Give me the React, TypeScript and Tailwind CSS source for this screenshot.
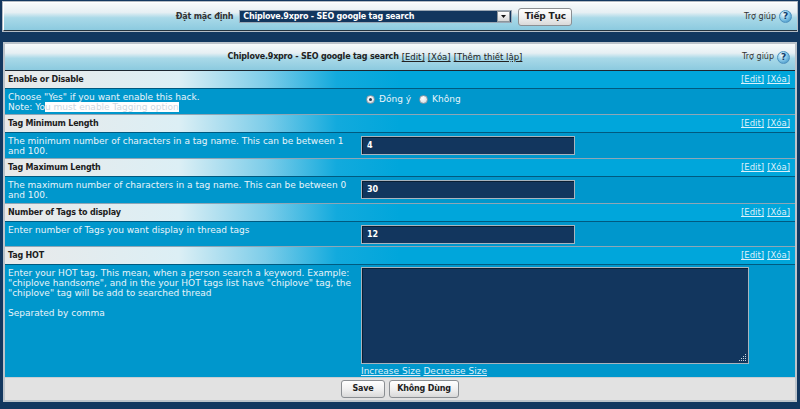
import type { ReactNode } from "react";

type Row = {
  title: string;
  height: string;
  description: ReactNode;
  control: ReactNode;
};

const HelpIcon = () => (
  <span className="inline-flex h-[13px] w-[13px] items-center justify-center rounded-full border border-[#4f93c0] bg-[radial-gradient(circle_at_35%_30%,#f2fafe_0%,#8ccbea_45%,#2f86bd_100%)] text-[9px] font-bold leading-none text-[#123e6a]">
    ?
  </span>
);

const Help = () => (
  <div className="flex w-[56px] items-center justify-end gap-[3px] whitespace-nowrap pr-[5px] text-[8px] text-[#333]">
    <span>Trợ giúp</span>
    <HelpIcon />
  </div>
);

const Radio = ({ checked }: { checked?: boolean }) => (
  <span className="inline-flex h-[9px] w-[9px] items-center justify-center rounded-full border border-[#8a98a4] bg-[radial-gradient(circle_at_40%_35%,#ffffff_0%,#dfe5ea_60%,#b3bec7_100%)]">
    {checked && <span className="h-[3px] w-[3px] rounded-full bg-[#1f3a52]" />}
  </span>
);

const TextInput = ({ value }: { value: string }) => (
  <div className="mt-[3px] flex h-[19px] w-[214px] items-center border border-[#a9b4be] bg-[#12365e] pl-[5px] text-[8px] font-bold text-white shadow-[inset_1px_1px_0_#0a1e33]">
    {value}
  </div>
);

const rows: Row[] = [
  {
    title: "Enable or Disable",
    height: "h-[26px]",
    description: (
      <>
        Choose "Yes" if you want enable this hack.
        <br />
        Note: Yo<span className="bg-white text-[#cdd8df]">u must enable Tagging option</span>
      </>
    ),
    control: (
      <div className="flex items-center gap-[4px] pl-[5px] pt-[5px]">
        <Radio checked />
        <span className="mr-[4px]">Đồng ý</span>
        <Radio />
        <span>Không</span>
      </div>
    ),
  },
  {
    title: "Tag Minimum Length",
    height: "h-[26px]",
    description: (
      <>
        The minimum number of characters in a tag name. This can be between 1
        <br />
        and 100.
      </>
    ),
    control: <TextInput value="4" />,
  },
  {
    title: "Tag Maximum Length",
    height: "h-[27px]",
    description: (
      <>
        The maximum number of characters in a tag name. This can be between 0
        <br />
        and 100.
      </>
    ),
    control: <TextInput value="30" />,
  },
  {
    title: "Number of Tags to display",
    height: "h-[25px]",
    description: <>Enter number of Tags you want display in thread tags</>,
    control: <TextInput value="12" />,
  },
  {
    title: "Tag HOT",
    height: "h-[112px]",
    description: (
      <>
        Enter your HOT tag. This mean, when a person search a keyword. Example:
        <br />
        "chiplove handsome", and in the your HOT tags list have "chiplove" tag, the
        <br />
        "chiplove" tag will be add to searched thread
        <br />
        <br />
        Separated by comma
      </>
    ),
    control: (
      <div className="pt-[2px]">
        <div className="relative h-[97px] w-[388px] border border-[#a9b4be] bg-[#12365e] shadow-[inset_1px_1px_0_#0a1e33]">
          <svg className="absolute bottom-[2px] right-[2px]" width="7" height="7" viewBox="0 0 7 7">
            <g fill="#c9d3dc">
              <rect x="6" y="0" width="1" height="1" />
              <rect x="4" y="2" width="1" height="1" />
              <rect x="6" y="2" width="1" height="1" />
              <rect x="2" y="4" width="1" height="1" />
              <rect x="4" y="4" width="1" height="1" />
              <rect x="6" y="4" width="1" height="1" />
              <rect x="0" y="6" width="1" height="1" />
              <rect x="2" y="6" width="1" height="1" />
              <rect x="4" y="6" width="1" height="1" />
              <rect x="6" y="6" width="1" height="1" />
            </g>
          </svg>
        </div>
        <div className="mt-[2px] flex gap-[3px] leading-[10px] text-[#dcf0fa] underline">
          <span>Increase Size</span>
          <span>Decrease Size</span>
        </div>
      </div>
    ),
  },
];

const Button = ({ children, width }: { children: ReactNode; width: string }) => (
  <button
    className={`flex h-[18px] ${width} items-center justify-center rounded-[3px] border border-[#8b8f93] bg-[linear-gradient(to_bottom,#ffffff_0%,#f1f1f1_50%,#d9d9d9_100%)] text-[8px] font-bold tracking-[-0.2px] text-[#222]`}
  >
    {children}
  </button>
);

const barGradient =
  "bg-[linear-gradient(to_bottom,#f7fafb_0%,#e6eff3_35%,#a9d9e8_55%,#8ccadf_100%)]";

export default function App() {
  return (
    <div className="h-[409px] w-[800px] overflow-hidden bg-[#12375f] pt-[1px] font-['DejaVu_Sans',Verdana,sans-serif] text-[9px] text-[#e8f4fa]">
      {/* top selector bar */}
      <div className="mx-[2px] border border-[#b4bcc4]">
        <div className={`flex h-[29px] items-center border-l border-t border-white border-b border-b-[#26323d] ${barGradient}`}>
          <div className="flex flex-1 items-center justify-center gap-[6px] pl-[3px]">
            <span className="text-[8px] font-bold tracking-[-0.2px] text-[#333]">Đặt mặc định</span>
            <div className="flex h-[13px] w-[273px] items-center border border-[#9aa7b4] bg-[#12365e]">
              <span className="flex-1 pl-[3px] text-[8px] font-bold tracking-[-0.2px] text-white">
                Chiplove.9xpro - SEO google tag search
              </span>
              <span className="mr-[1px] flex h-[11px] w-[13px] items-center justify-center border border-[#8c949b] bg-[linear-gradient(to_bottom,#ffffff,#d6d6d6)]">
                <svg width="5" height="3" viewBox="0 0 5 3">
                  <path d="M0 0h5L2.5 3z" fill="#111" />
                </svg>
              </span>
            </div>
            <Button width="w-[54px]">
              <span className="text-[9px]">Tiếp Tục</span>
            </Button>
          </div>
          <Help />
        </div>
      </div>

      {/* main settings panel */}
      <div className="mx-[3px] mt-[10px] border-2 border-[#bcc3ca]">
        <div className={`flex h-[27px] items-center border-b border-b-[#1c2630] ${barGradient}`}>
          <div className="flex flex-1 items-center justify-center gap-[3px] pl-[6px] text-[8.5px] text-[#222]">
            <span className="text-[8px] font-bold tracking-[-0.2px]">Chiplove.9xpro - SEO google tag search</span>
            <span className="underline">[Edit]</span>
            <span className="underline">[Xóa]</span>
            <span className="underline">[Thêm thiết lập]</span>
          </div>
          <Help />
        </div>

        {rows.map((row, i) => (
          <div key={row.title}>
            <div className="flex h-[18px] items-center justify-between border-b border-b-[#005a80] bg-[linear-gradient(to_right,#e9e9e9_0%,#dceff5_22%,#7dcde9_33%,#12aadd_42%,#00a6db_50%)] pl-[3px] pr-[5px]">
              <span className="text-[8px] font-bold tracking-[-0.2px] text-[#1c1c1c]">{row.title}</span>
              <span className="flex gap-[3px] text-[8.5px] text-[#dcf0fa] underline">
                <span>[Edit]</span>
                <span>[Xóa]</span>
              </span>
            </div>
            <div
              className={`flex ${row.height} ${i < rows.length - 1 ? "border-b border-b-[#8ea6b6]" : ""} bg-[#0097cc] leading-[10px]`}
            >
              <div className="w-[356px] whitespace-nowrap pl-[3px] pt-[3px]">{row.description}</div>
              <div className="flex-1">{row.control}</div>
            </div>
          </div>
        ))}

        <div className="flex h-[23px] items-center justify-center gap-[4px] border-t border-t-[#c8ced3] bg-[#e2e2e2]">
          <Button width="w-[44px]">Save</Button>
          <Button width="w-[70px]">Không Dùng</Button>
        </div>
      </div>
    </div>
  );
}
